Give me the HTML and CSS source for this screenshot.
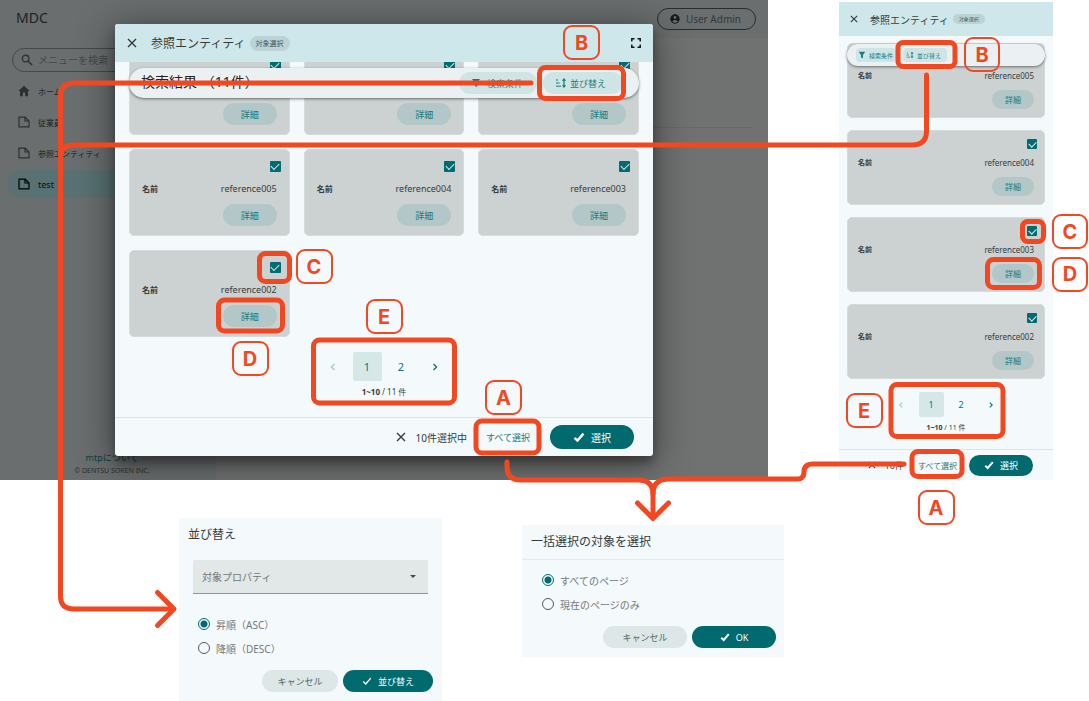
FILE: index.html
```html
<!DOCTYPE html>
<html lang="ja">
<head>
<meta charset="utf-8">
<meta name="viewport" content="width=device-width, initial-scale=1">
<title>MDC 参照エンティティ</title>
<link rel="stylesheet" href="styles.css">
</head>
<body>
<svg class="sprite" aria-hidden="true">
  <symbol id="i-close" viewBox="0 0 10 10"><path d="M1 1l8 8M9 1l-8 8" fill="none" stroke="currentColor" stroke-width="1.4"/></symbol>
  <symbol id="i-check" viewBox="0 0 12 12"><path d="M1.500 6.800l3 2.800 6-7" fill="none" stroke="currentColor" stroke-width="2.400"/></symbol>
  <symbol id="i-thin" viewBox="0 0 12 12"><path d="M1.500 6.500l3 3 6-7" fill="none" stroke="currentColor" stroke-width="1.600"/></symbol>
  <symbol id="i-file" viewBox="0 0 12 12"><path d="M1 1.200h6.200L11 5v5.800H1zM7 1.200V5h4" fill="none" stroke="currentColor" stroke-width="1.200"/></symbol>
  <symbol id="i-home" viewBox="0 0 12 12"><path d="M6 .8L11.800 6H10v5.200H7.200V7.600H4.800v3.600H2V6H.2z" fill="currentColor"/></symbol>
  <symbol id="i-search" viewBox="0 0 12 12"><circle cx="4.600" cy="4.600" r="3.300" fill="none" stroke="currentColor" stroke-width="1.400"/><path d="M7 7l4 4" stroke="currentColor" stroke-width="1.700"/></symbol>
  <symbol id="i-filter" viewBox="0 0 10 10"><path d="M1 1h8L6.200 5v4L3.800 8V5z" fill="currentColor"/></symbol>
  <symbol id="i-sort" viewBox="0 0 12 10"><path d="M1 2h2M1 5h3.500M1 8.200h5" stroke="currentColor"/><path d="M9 1.500v7" stroke="currentColor" stroke-width="1.300"/><path d="M9 0l2.200 2.800H6.800zM9 10l2.200-2.800H6.800z" fill="currentColor"/></symbol>
  <symbol id="i-full" viewBox="0 0 10 10"><path d="M.8 3.500V.8h2.700M6.500.8h2.700v2.700M9.200 6.500v2.700H6.500M3.500 9.200H.8V6.500" fill="none" stroke="currentColor" stroke-width="1.500"/></symbol>
  <symbol id="i-prev" viewBox="0 0 10 10"><path d="M6.500 2L3.500 5l3 3" fill="none" stroke="currentColor" stroke-width="1.400"/></symbol>
  <symbol id="i-next" viewBox="0 0 10 10"><path d="M3.500 2l3 3-3 3" fill="none" stroke="currentColor" stroke-width="1.400"/></symbol>
  <symbol id="i-user" viewBox="0 0 12 12"><circle cx="6" cy="6" r="5.600" fill="currentColor"/><circle cx="6" cy="4.200" r="1.700" fill="#6a6e6f"/><path d="M2.600 8.600q3.400-2.600 6.800 0-3.400 3.600-6.800 0z" fill="#6a6e6f"/></symbol>
</svg>

<main class="board">
  <div class="row-top">
    <section class="app">
      <header class="app-bar">
        <span class="brand">MDC</span>
        <button class="user" type="button"><svg class="ico10"><use href="#i-user"/></svg>User Admin</button>
      </header>
      <div class="app-main">
        <nav class="side">
          <label class="search"><svg class="ico12"><use href="#i-search"/></svg><input type="search" placeholder="メニューを検索" aria-label="メニューを検索"></label>
          <a class="item" href="#"><svg class="ico12"><use href="#i-home"/></svg>ホーム</a>
          <a class="item" href="#"><svg class="ico12"><use href="#i-file"/></svg>従業員</a>
          <a class="item" href="#"><svg class="ico12"><use href="#i-file"/></svg>参照エンティティ</a>
          <a class="item active" href="#"><svg class="ico12"><use href="#i-file"/></svg><span class="latin">test</span></a>
          <div class="about"><a href="#">mtpについて</a><small>© DENTSU SOKEN INC.</small></div>
        </nav>
        <div class="page"><hr></div>
      </div>

      <div class="overlay">
        <section class="dialog picker" role="dialog" aria-label="参照エンティティ">
          <header class="p-head">
            <button class="icon-btn" type="button" aria-label="閉じる"><svg class="ico10"><use href="#i-close"/></svg></button>
            <h2>参照エンティティ</h2><span class="tag">対象選択</span>
            <button class="icon-btn end" type="button" aria-label="全画面"><svg class="ico10"><use href="#i-full"/></svg></button>
          </header>
          <div class="p-body">
            <div class="toolbar">
              <h3>検索結果 （11件）</h3>
              <button class="tool" type="button"><svg class="ico10"><use href="#i-filter"/></svg>検索条件</button>
              <button class="tool by-order" type="button"><svg class="ico-sort"><use href="#i-sort"/></svg>並び替え</button>
            </div>
            <div class="cards">
              <article class="card"><input type="checkbox" checked aria-label="選択"><p></p><button type="button">詳細</button></article>
              <article class="card"><input type="checkbox" checked aria-label="選択"><p></p><button type="button">詳細</button></article>
              <article class="card"><input type="checkbox" checked aria-label="選択"><p></p><button type="button">詳細</button></article>
              <article class="card"><input type="checkbox" checked aria-label="reference005"><p><b>名前</b><span>reference005</span></p><button type="button">詳細</button></article>
              <article class="card"><input type="checkbox" checked aria-label="reference004"><p><b>名前</b><span>reference004</span></p><button type="button">詳細</button></article>
              <article class="card"><input type="checkbox" checked aria-label="reference003"><p><b>名前</b><span>reference003</span></p><button type="button">詳細</button></article>
              <article class="card"><input type="checkbox" checked aria-label="reference002"><p><b>名前</b><span>reference002</span></p><button type="button">詳細</button></article>
            </div>
            <nav class="pager">
              <div class="pages">
                <button type="button" disabled aria-label="前へ"><svg class="ico10"><use href="#i-prev"/></svg></button>
                <button type="button" class="on">1</button><button type="button">2</button>
                <button type="button" aria-label="次へ"><svg class="ico10"><use href="#i-next"/></svg></button>
              </div>
              <p><b>1~10</b> / 11 件</p>
            </nav>
          </div>
          <footer class="p-foot">
            <button class="icon-btn" type="button" aria-label="選択解除"><svg class="ico10"><use href="#i-close"/></svg></button>
            <span class="count">10件選択中</span>
            <button class="link" type="button">すべて選択</button>
            <button class="primary" type="button"><svg class="ico12"><use href="#i-check"/></svg>選択</button>
          </footer>
        </section>
      </div>
    </section>

    <section class="picker phone">
      <header class="p-head">
        <button class="icon-btn" type="button" aria-label="閉じる"><svg class="ico8"><use href="#i-close"/></svg></button>
        <h2>参照エンティティ</h2><span class="tag">対象選択</span>
      </header>
      <div class="p-body">
        <div class="toolbar">
          <button class="tool" type="button"><svg class="ico8"><use href="#i-filter"/></svg>検索条件</button>
          <button class="tool by-order" type="button"><svg class="ico8"><use href="#i-sort"/></svg>並び替え</button>
        </div>
        <div class="cards">
          <article class="card"><input type="checkbox" checked aria-label="reference005"><p><b>名前</b><span>reference005</span></p><button type="button">詳細</button></article>
          <article class="card"><input type="checkbox" checked aria-label="reference004"><p><b>名前</b><span>reference004</span></p><button type="button">詳細</button></article>
          <article class="card"><input type="checkbox" checked aria-label="reference003"><p><b>名前</b><span>reference003</span></p><button type="button">詳細</button></article>
          <article class="card"><input type="checkbox" checked aria-label="reference002"><p><b>名前</b><span>reference002</span></p><button type="button">詳細</button></article>
        </div>
        <nav class="pager">
          <div class="pages">
            <button type="button" disabled aria-label="前へ"><svg class="ico8"><use href="#i-prev"/></svg></button>
            <button type="button" class="on">1</button><button type="button">2</button>
            <button type="button" aria-label="次へ"><svg class="ico8"><use href="#i-next"/></svg></button>
          </div>
          <p><b>1~10</b> / 11 件</p>
        </nav>
      </div>
      <footer class="p-foot">
        <button class="icon-btn" type="button" aria-label="選択解除"><svg class="ico8"><use href="#i-close"/></svg></button>
        <span class="count">10件</span>
        <button class="link" type="button">すべて選択</button>
        <button class="primary" type="button"><svg class="ico10"><use href="#i-check"/></svg>選択</button>
      </footer>
    </section>
  </div>

  <div class="row-bottom">
    <form class="box sort">
      <h2>並び替え</h2>
      <div class="fields">
        <div class="select"><select aria-label="対象プロパティ"><option>対象プロパティ</option></select></div>
        <label><input type="radio" name="order" checked>昇順（ASC）</label>
        <label><input type="radio" name="order">降順（DESC）</label>
      </div>
      <div class="actions"><button class="cancel" type="button">キャンセル</button><button class="primary" type="button"><svg class="ico10"><use href="#i-thin"/></svg>並び替え</button></div>
    </form>
    <form class="box bulk">
      <h2>一括選択の対象を選択</h2>
      <div class="fields">
        <label><input type="radio" name="range" checked>すべてのページ</label>
        <label><input type="radio" name="range">現在のページのみ</label>
      </div>
      <div class="actions"><button class="cancel" type="button">キャンセル</button><button class="primary" type="button"><svg class="ico10"><use href="#i-check"/></svg>OK</button></div>
    </form>
  </div>

  <svg class="notes" width="1089" height="701" viewBox="0 0 1089 701">
    <g class="wire">
      <path d="M531 83H74Q60.500 83 60.500 96V596Q60.500 609 74 609H173"/>
      <path d="M157.500 592.500L174 609l-16.500 16.500"/>
      <path d="M60.500 158Q60.500 145 74 145H912Q926.500 145 926.500 131V75"/>
      <path d="M507 462v5Q507 480 521 480H638Q653 480 653 494V517"/>
      <path d="M904 464H813Q804 464 804 472T795 479H667Q653 480 653 494"/>
      <path d="M637.500 503L653 518.500 668.500 503"/>
    </g>
    <g class="frame">
      <rect x="539.500" y="67.500" width="84" height="31" rx="6"/>
      <rect x="259.500" y="253.500" width="30" height="28" rx="6"/>
      <rect x="218.500" y="300" width="64" height="31" rx="6"/>
      <rect x="313.500" y="340" width="141" height="63" rx="6"/>
      <rect x="476" y="421" width="63" height="32" rx="6"/>
      <rect x="898" y="42.500" width="57" height="24" rx="5"/>
      <rect x="1022.500" y="221.500" width="21" height="20" rx="5"/>
      <rect x="987.500" y="259.500" width="52" height="28" rx="6"/>
      <rect x="891" y="384.500" width="112" height="52" rx="6"/>
      <rect x="912" y="451.500" width="50" height="25" rx="6"/>
    </g>
    <g class="key">
      <rect x="564" y="26" width="35" height="33" rx="8"/><text x="581.500" y="50">B</text>
      <rect x="297" y="250" width="35" height="33" rx="8"/><text x="314" y="274">C</text>
      <rect x="233" y="342" width="35" height="33" rx="8"/><text x="250" y="366">D</text>
      <rect x="367" y="300" width="35" height="33" rx="8"/><text x="384" y="324">E</text>
      <rect x="486" y="381" width="35" height="33" rx="8"/><text x="503.500" y="405">A</text>
      <rect x="965" y="38" width="34" height="33" rx="8"/><text x="982" y="62">B</text>
      <rect x="1053" y="215" width="34" height="33" rx="8"/><text x="1070" y="239">C</text>
      <rect x="1053" y="258" width="34" height="33" rx="8"/><text x="1070" y="281">D</text>
      <rect x="847" y="394" width="35" height="33" rx="8"/><text x="864" y="418">E</text>
      <rect x="919" y="491" width="35" height="33" rx="8"/><text x="936" y="515">A</text>
    </g>
  </svg>
</main>
</body>
</html>
```
FILE: styles.css
```css
* { box-sizing: border-box; }
body { margin: 0; background: #fff; font-family: "Noto Sans", "Noto Sans CJK JP", sans-serif; color: #363c3c; }
h2, h3, p { margin: 0; font-weight: 400; }
button { border: 0; padding: 0; background: none; font-family: inherit; color: inherit; display: flex; align-items: center; justify-content: center; }
svg { flex: none; display: block; }
.sprite { position: absolute; width: 0; height: 0; }
.ico8 { width: 8px; height: 8px; }
.ico10 { width: 10px; height: 10px; }
.ico12 { width: 12px; height: 12px; }
.ico-sort { width: 12px; height: 10px; }

.board { position: relative; min-height: 701px; overflow: hidden; }
.row-top { display: flex; align-items: flex-start; gap: 71px; }
.row-bottom { display: flex; align-items: flex-start; gap: 80px; padding: 38px 0 0 179px; }

/* Application window behind the picker */
.app { position: relative; flex: 0 0 768px; height: 480px; display: flex; flex-direction: column; background: #707271; overflow: hidden; }
.app-bar { height: 38px; display: flex; align-items: center; justify-content: space-between; padding: 0 12px 0 16px; background: #6a6e6f; }
.brand { padding-bottom: 3px; font-size: 14px; color: #1f2222; }
.user { height: 22px; padding: 0 14px 0 12px; gap: 6px; border: 1px solid #2a2d2d; border-radius: 11px; font-size: 10px; color: #343838; }
.user svg { color: #151818; }
.app-main { flex: 1; display: flex; }
.side { width: 216px; padding: 10px 0 3px 8px; display: flex; flex-direction: column; background: #6a6e6f; }
.search { display: flex; align-items: center; gap: 5px; height: 24px; margin: 0 4px 5px; padding: 0 8px; border: 1px solid #454949; border-radius: 12px; color: #303434; }
.search input { flex: 1; min-width: 0; border: 0; padding: 0; background: none; font: inherit; font-size: 10px; outline: none; }
.search input::placeholder { color: #454a4a; opacity: 1; }
.item { display: flex; align-items: center; gap: 8px; height: 28px; margin-bottom: 3px; padding: 0 10px; border-radius: 14px; font-size: 8px; color: #1c1f1f; text-decoration: none; }
.item svg { color: #2c3030; }
.item.active { background: #587172; color: #0c1010; }
.item.active svg { color: #000; }
.latin { font-size: 9px; }
.about { display: flex; flex-direction: column; align-items: center; margin-top: auto; font-size: 9px; line-height: 14px; }
.about a { color: #0c3d40; text-decoration: none; }
.about small { font-size: 7px; line-height: 12px; color: #2c3030; }
.page { flex: 1; padding: 89px 15px 0 0; }
.page hr { margin: 0; border: 0; border-top: 1px solid #666a6a; }
.overlay { position: absolute; inset: 0; display: flex; padding: 24px 115px; }

/* Entity picker */
.picker { display: flex; flex-direction: column; background: #f4f9fc; }
.dialog { flex: 1; border-radius: 3px; overflow: hidden; box-shadow: 0 7px 10px rgba(0,0,0,.3), 0 6px 36px 3px rgba(0,0,0,.42); }
.p-head { display: flex; align-items: center; height: 38px; padding: 0 12px; background: #cee7ea; }
.p-head h2 { margin: 0 4px 0 14px; font-size: 12px; }
.icon-btn.end { margin-left: auto; color: #101414; }
.tag { padding: 0 6px; border-radius: 8px; background: #bcd3d6; font-size: 7px; line-height: 15px; color: #455556; }
.p-body { position: relative; flex: 1; min-height: 0; display: flex; flex-direction: column; justify-content: flex-end; padding: 0 14px; overflow: hidden; }
.toolbar { position: absolute; z-index: 1; inset: 6px 14px auto; height: 30px; display: flex; align-items: center; gap: 6px; padding: 0 16px 0 12px; border-radius: 15px; background: #ebf1f2; box-shadow: 0 1px 3px rgba(0,0,0,.5); }
.toolbar h3 { margin-right: auto; padding-bottom: 3px; font-size: 14px; line-height: 20px; color: #1f2424; }
.tool { height: 22px; padding: 0 14px 0 12px; gap: 6px; border-radius: 11px; background: #cfe4e4; color: #197b80; font-size: 9px; }
.by-order { gap: 3px; padding-right: 17px; }
.cards { display: grid; grid-template-columns: repeat(3, 1fr); gap: 14px; }
.card { display: flex; flex-direction: column; align-items: flex-end; height: 87px; padding: 11px 12px 0; border-radius: 5px; background: #ccd2d2; border: 1px solid #d5dada; }
.card p { display: flex; justify-content: space-between; align-items: center; align-self: stretch; min-height: 16px; margin: 9px 0 7px; font-size: 9px; line-height: 16px; }
.card b { font-size: 8px; }
.card button { width: 54px; height: 22px; border-radius: 11px; background: #b3c7c8; color: #137b80; font-size: 9px; }
.card input { appearance: none; width: 11px; height: 11px; margin: 0 -4px 0 0; border-radius: 1px; background: #006b70; display: grid; place-items: center; }
.card input::after { content: ""; width: 7px; height: 4px; margin-bottom: 2px; border: solid #e2eaea; border-width: 0 0 1px 1px; transform: rotate(-45deg); }
.pager { display: flex; flex-direction: column; align-items: center; padding: 15px 0 17px; }
.pages { display: flex; gap: 5px; margin-bottom: 3px; }
.pages button { width: 29px; height: 29px; border-radius: 2px; color: #0b7478; font-size: 11px; }
.pages .on { background: #d5e8e7; }
.pages button:disabled { color: #9dccca; }
.pager p { font-size: 8px; line-height: 16px; }
.p-foot { display: flex; align-items: center; justify-content: flex-end; height: 39px; padding: 0 19px; border-top: 1px solid #dde3e6; }
.count { margin: 0 19px 0 10px; font-size: 10px; }
.link { margin-right: 20px; color: #197b80; font-size: 9px; }
.primary { width: 84px; height: 24px; gap: 6px; border-radius: 12px; background: #006a6f; color: #fff; font-size: 10px; }

/* Narrow-screen picker */
.phone { flex: 0 0 214px; height: 478px; margin-top: 2px; }
.phone .p-head { height: 34px; padding: 0 11px; }
.phone .p-head h2 { margin: 0 4px 0 12px; font-size: 10px; }
.phone .tag { font-size: 5px; line-height: 10px; }
.phone .p-body { padding: 0 8px; }
.phone .toolbar { inset: 8px 8px auto; height: 22px; gap: 7px; padding: 0 9px; border-radius: 11px; }
.phone .tool { height: 14px; padding: 0 3px 0 2px; gap: 3px; font-size: 6px; border-radius: 4px; }
.phone .by-order { padding: 0 6px 0 3px; }
.phone .cards { grid-template-columns: 1fr; gap: 12px; }
.phone .card { height: 75px; padding: 8px 10px 0; }
.phone .card p { margin: 6px 0; font-size: 8px; }
.phone .card b { font-size: 7px; }
.phone .card button { width: 42px; height: 19px; font-size: 8px; }
.phone .card input { width: 10px; height: 10px; margin-right: -3px; }
.phone .card input::after { width: 6px; }
.phone .pager { padding: 13px 0 13px; }
.phone .pages button { width: 25px; height: 25px; font-size: 9px; }
.phone .pager p { font-size: 7px; }
.phone .p-foot { height: 31px; padding: 0 20px; }
.phone .count { margin: 0 14px 0 9px; font-size: 9px; }
.phone .link { margin-right: 12px; font-size: 8px; }
.phone .primary { width: 64px; height: 21px; font-size: 9px; }

/* Small dialogs */
.box { background: #f4f9fc; }
.box h2 { padding: 0 9px; font-size: 12px; line-height: 34px; }
.box label { display: flex; align-items: center; gap: 6px; height: 24px; font-size: 10px; color: #737878; }
.box label input { appearance: none; width: 12px; height: 12px; margin: 0; border: 1px solid #555a5a; border-radius: 50%; }
.box label input:checked { border-color: #006b70; background: radial-gradient(circle, #006b70 3px, transparent 4px); }
.actions { display: flex; justify-content: flex-end; gap: 5px; }
.cancel { width: 84px; height: 22px; border-radius: 11px; background: #dee7e7; color: #4c6767; font-size: 9px; }
.actions .primary { height: 22px; font-size: 9px; }
.sort { width: 263px; padding-bottom: 9px; }
.sort .fields { padding: 8px 14px 10px; }
.sort label { padding-left: 5px; }
.sort .actions { padding-right: 9px; }
.sort .cancel { width: 76px; }
.sort .primary { width: 90px; }
.select { position: relative; margin-bottom: 18px; }
.select select { appearance: none; display: block; width: 100%; height: 34px; padding: 0 9px; border: 0; border-bottom: 1px solid #8f9494; border-radius: 2px 2px 0 0; background: #e2e7e7; font: inherit; font-size: 10px; color: #727777; }
.select::after { content: ""; position: absolute; right: 12px; top: 15px; border: 3px solid transparent; border-top-color: #444949; }
.bulk { width: 262px; margin-top: 7px; padding-bottom: 9px; }
.bulk h2 { border-bottom: 1px solid #e3eaec; }
.bulk .fields { padding: 8px 20px 10px; }
.bulk .actions { padding-right: 8px; }

/* Callouts and connectors drawn over the screens */
.notes { position: absolute; z-index: 2; top: 0; left: 0; pointer-events: none; }
.wire, .frame { fill: none; stroke: #f24822; stroke-width: 5; stroke-linecap: round; stroke-linejoin: round; }
.key rect { fill: none; stroke: #f24822; stroke-width: 2; }
.key text { fill: #f24822; font-family: Inter, sans-serif; font-size: 20px; font-weight: 700; text-anchor: middle; }
```
